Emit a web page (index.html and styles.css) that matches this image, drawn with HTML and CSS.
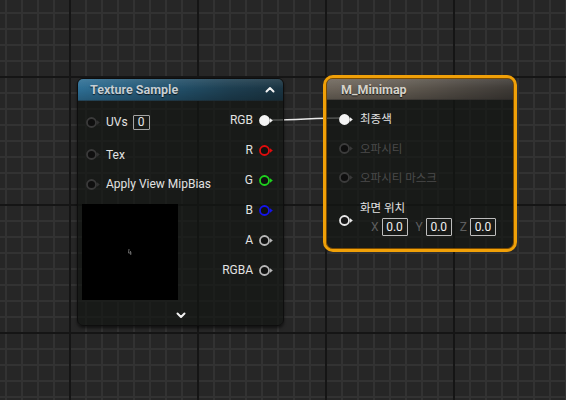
FILE: index.html
```html
<!DOCTYPE html>
<html lang="ko">
<head>
<meta charset="utf-8">
<title>Material Graph</title>
<link rel="stylesheet" href="styles.css">
</head>
<body>
<div class="canvas">
  <svg class="wire" width="566" height="400" viewBox="0 0 566 400">
    <path d="M271 120 C 300 120, 312 118, 342 118" />
  </svg>

  <div class="node tex">
    <div class="hdr tex-hdr">
      <span class="title">Texture Sample</span>
      <svg class="chev" width="10" height="7" viewBox="0 0 10 7"><path d="M1.5 5.5 L5 2 L8.5 5.5"/></svg>
    </div>
    <div class="body">
      <div class="col in">
        <div class="irow r1">
          <svg class="pin off" width="14" height="11" viewBox="0 0 14 11"><circle cx="5.5" cy="5.5" r="4.5"/><path d="M11 3.3 L13.8 5.5 L11 7.7 Z"/></svg>
          <span class="lbl">UVs</span><span class="cbox">0</span>
        </div>
        <div class="irow r2">
          <svg class="pin off" width="14" height="11" viewBox="0 0 14 11"><circle cx="5.5" cy="5.5" r="4.5"/><path d="M11 3.3 L13.8 5.5 L11 7.7 Z"/></svg>
          <span class="lbl">Tex</span>
        </div>
        <div class="irow r3">
          <svg class="pin off" width="14" height="11" viewBox="0 0 14 11"><circle cx="5.5" cy="5.5" r="4.5"/><path d="M11 3.3 L13.8 5.5 L11 7.7 Z"/></svg>
          <span class="lbl">Apply View MipBias</span>
        </div>
        <div class="preview">
          <svg class="speck" width="6" height="8" viewBox="0 0 6 8"><path d="M2 1 L1.5 5 L4.5 5 M3.5 3 L3.8 7"/></svg>
        </div>
      </div>
      <div class="col out">
        <div class="orow"><span class="lbl">RGB</span>
          <svg class="pin rgb" width="14" height="11" viewBox="0 0 14 11"><circle cx="5.5" cy="5.5" r="4.5"/><path d="M11 3.3 L13.8 5.5 L11 7.7 Z"/></svg></div>
        <div class="orow"><span class="lbl">R</span>
          <svg class="pin red" width="14" height="11" viewBox="0 0 14 11"><circle cx="5.5" cy="5.5" r="4.5"/><path d="M11 3.3 L13.8 5.5 L11 7.7 Z"/></svg></div>
        <div class="orow"><span class="lbl">G</span>
          <svg class="pin green" width="14" height="11" viewBox="0 0 14 11"><circle cx="5.5" cy="5.5" r="4.5"/><path d="M11 3.3 L13.8 5.5 L11 7.7 Z"/></svg></div>
        <div class="orow"><span class="lbl">B</span>
          <svg class="pin blue" width="14" height="11" viewBox="0 0 14 11"><circle cx="5.5" cy="5.5" r="4.5"/><path d="M11 3.3 L13.8 5.5 L11 7.7 Z"/></svg></div>
        <div class="orow"><span class="lbl">A</span>
          <svg class="pin gray" width="14" height="11" viewBox="0 0 14 11"><circle cx="5.5" cy="5.5" r="4.5"/><path d="M11 3.3 L13.8 5.5 L11 7.7 Z"/></svg></div>
        <div class="orow"><span class="lbl">RGBA</span>
          <svg class="pin gray" width="14" height="11" viewBox="0 0 14 11"><circle cx="5.5" cy="5.5" r="4.5"/><path d="M11 3.3 L13.8 5.5 L11 7.7 Z"/></svg></div>
      </div>
    </div>
    <div class="foot">
      <svg class="chev" width="10" height="7" viewBox="0 0 10 7"><path d="M1.5 1.5 L5 5 L8.5 1.5"/></svg>
    </div>
  </div>

  <div class="sel">
    <div class="node mm">
      <div class="hdr mm-hdr"><span class="title">M_Minimap</span></div>
      <div class="mm-body">
        <div class="mrow m1">
          <svg class="pin rgb" width="14" height="11" viewBox="0 0 14 11"><circle cx="5.5" cy="5.5" r="4.5"/><path d="M11 3.3 L13.8 5.5 L11 7.7 Z"/></svg>
          <span class="lbl ko">최종색</span>
        </div>
        <div class="mrow m2">
          <svg class="pin dis" width="14" height="11" viewBox="0 0 14 11"><circle cx="5.5" cy="5.5" r="4.5"/><path d="M11 3.3 L13.8 5.5 L11 7.7 Z"/></svg>
          <span class="lbl ko dim">오파시티</span>
        </div>
        <div class="mrow m3">
          <svg class="pin dis" width="14" height="11" viewBox="0 0 14 11"><circle cx="5.5" cy="5.5" r="4.5"/><path d="M11 3.3 L13.8 5.5 L11 7.7 Z"/></svg>
          <span class="lbl ko dim">오파시티 마스크</span>
        </div>
        <div class="mrow m4">
          <svg class="pin white" width="14" height="11" viewBox="0 0 14 11"><circle cx="5.5" cy="5.5" r="4.5"/><path d="M11 3.3 L13.8 5.5 L11 7.7 Z"/></svg>
          <div class="m4-text">
            <span class="lbl ko">화면 위치</span>
            <div class="vec">
              <span class="axis">X</span><span class="vbox">0.0</span>
              <span class="axis">Y</span><span class="vbox">0.0</span>
              <span class="axis">Z</span><span class="vbox last">0.0</span>
            </div>
          </div>
        </div>
      </div>
    </div>
  </div>
</div>
</body>
</html>
```

FILE: styles.css
```css
html, body {
  margin: 0;
  padding: 0;
  background: #262626;
}

.canvas {
  position: relative;
  width: 566px;
  height: 400px;
  overflow: hidden;
  font-family: Roboto, "Noto Sans CJK KR", sans-serif;
  font-size: 12px;
  color: #e2e2e2;
  background-color: #262626;
  background-image:
    linear-gradient(to right, #151515 0 2px, transparent 2px),
    linear-gradient(to bottom, #151515 0 2px, transparent 2px),
    linear-gradient(to right, #323232 0 2px, transparent 2px),
    linear-gradient(to bottom, #323232 0 2px, transparent 2px);
  background-size: 128px 100%, 100% 128px, 16px 100%, 100% 16px;
  background-position: 69px 0, 0 76px, 5px 0, 0 12px;
}

.wire {
  position: absolute;
  left: 0;
  top: 0;
  z-index: 1;
}
.wire path {
  fill: none;
  stroke: #e8e8e8;
  stroke-width: 1.6;
}

/* ---------- nodes ---------- */
.node {
  box-sizing: border-box;
  display: flex;
  flex-direction: column;
  background: rgba(20, 22, 19, 0.72);
  border-radius: 6px;
}

.tex {
  position: absolute;
  z-index: 2;
  left: 77px;
  top: 78px;
  width: 207px;
  height: 248px;
  border: 1px solid #0e0e0e;
  box-shadow: 0 2px 3px rgba(0, 0, 0, 0.55);
}

.hdr {
  display: flex;
  align-items: center;
  justify-content: space-between;
  border-radius: 5px 5px 0 0;
  border-bottom: 1px solid rgba(0, 0, 0, 0.45);
}
.title {
  font-weight: 700;
  font-size: 12.5px;
  text-shadow: 0 1px 1px rgba(0, 0, 0, 0.7);
}

.tex-hdr {
  height: 22px;
  box-sizing: border-box;
  padding: 0 8px 0 12px;
  background:
    linear-gradient(to bottom, rgba(255, 255, 255, 0.10), rgba(255, 255, 255, 0) 45%, rgba(0, 0, 0, 0.18)),
    linear-gradient(to right, #2e6f95 0%, #255875 35%, #1d3e50 75%, #1a3442 100%);
}
.tex-hdr .title {
  color: #c6ced3;
}

.chev path {
  fill: none;
  stroke: #f2f2f2;
  stroke-width: 2;
  stroke-linecap: round;
  stroke-linejoin: round;
}

.body {
  display: flex;
  justify-content: space-between;
}

.col.in {
  display: flex;
  flex-direction: column;
  padding-top: 4px;
}
.irow {
  display: flex;
  align-items: center;
  padding-left: 8px;
}
.irow.r1 { height: 34px; }
.irow.r2 { height: 31px; }
.irow.r3 { height: 28px; }
.irow .pin { margin-right: 6px; }

.lbl {
  white-space: nowrap;
  line-height: 14px;
}

.cbox {
  box-sizing: border-box;
  margin-left: 5px;
  width: 17px;
  height: 15px;
  border: 1px solid #a4a4a4;
  border-radius: 1px;
  display: flex;
  align-items: center;
  justify-content: center;
  font-size: 12px;
  color: #e6e6e6;
}

.preview {
  margin: 6px 0 0 4px;
  width: 96px;
  height: 96px;
  background: #000;
  display: flex;
  align-items: center;
  justify-content: center;
}
.speck path {
  fill: none;
  stroke: #6a6a6a;
  stroke-width: 1;
}

.col.out {
  display: flex;
  flex-direction: column;
  align-items: flex-end;
  padding: 4px 10px 0 0;
}
.orow {
  height: 30px;
  display: flex;
  align-items: center;
}
.orow .pin { margin-left: 6px; }

.foot {
  flex: 1;
  display: flex;
  justify-content: center;
  align-items: center;
  padding-top: 6px;
}

/* ---------- pins ---------- */
.pin circle {
  stroke-width: 1.8;
  fill: #101110;
}
.pin path { stroke: none; }

.pin.off circle { stroke: #3a3a3a; fill: #0f0f0f; }
.pin.off path { fill: #333; }

.pin.rgb circle { stroke: #f4f4f4; fill: #f4f4f4; }
.pin.rgb path { fill: #f4f4f4; }

.pin.red circle { stroke: #e00c0c; }
.pin.red path { fill: #e00c0c; }

.pin.green circle { stroke: #1ed21e; }
.pin.green path { fill: #1ed21e; }

.pin.blue circle { stroke: #1414ec; }
.pin.blue path { fill: #1414ec; }

.pin.gray circle { stroke: #b8b8b8; }
.pin.gray path { fill: #b8b8b8; }

.pin.white circle { stroke: #e8e8e8; fill: #161616; }
.pin.white path { fill: #e8e8e8; }

.pin.dis circle { stroke: #3c3c3c; fill: #0e0e0e; }
.pin.dis path { fill: #383838; }

/* ---------- minimap (selected) ---------- */
.sel {
  position: absolute;
  z-index: 2;
  left: 323px;
  top: 75px;
  width: 194px;
  height: 177px;
  box-sizing: border-box;
  padding: 1px;
  border: 3px solid #f0a008;
  border-radius: 10px;
  box-shadow: inset 0 0 0 1px #7a4a00;
}

.mm {
  width: 100%;
  height: 100%;
}

.mm-hdr {
  height: 21px;
  box-sizing: border-box;
  padding-left: 14px;
  background:
    linear-gradient(to bottom, rgba(255, 255, 255, 0.10), rgba(255, 255, 255, 0) 45%, rgba(0, 0, 0, 0.2)),
    linear-gradient(to right, #6d655b 0%, #625b52 40%, #4c4741 75%, #3e3a36 100%);
}
.mm-hdr .title {
  color: #d6d2ca;
}

.mm-body {
  display: flex;
  flex-direction: column;
  padding-top: 4px;
}

.mrow {
  display: flex;
  align-items: center;
  padding-left: 12px;
}
.mrow .pin { margin-right: 7px; }
.mrow.m1 { height: 30px; }
.mrow.m2 { height: 29px; }
.mrow.m3 { height: 29px; }
.mrow.m4 {
  margin-top: 8px;
  align-items: center;
}
.mrow.m4 .pin { margin-top: 4px; }

.ko {
  font-size: 11.5px;
}
.dim {
  color: #4b4b4b;
}

.m4-text {
  display: flex;
  flex-direction: column;
}
.m4-text .lbl {
  line-height: 17px;
}

.vec {
  display: flex;
  align-items: center;
  margin-top: 1px;
  padding-left: 11px;
}
.axis {
  color: #5e5e5e;
  margin-right: 3px;
}
.vbox {
  box-sizing: border-box;
  width: 26px;
  height: 18px;
  border: 1px solid #bdbdbd;
  border-radius: 1px;
  margin-right: 8px;
  display: flex;
  align-items: center;
  justify-content: center;
  color: #f0f0f0;
}
.vbox.last {
  margin-right: 0;
}
```
